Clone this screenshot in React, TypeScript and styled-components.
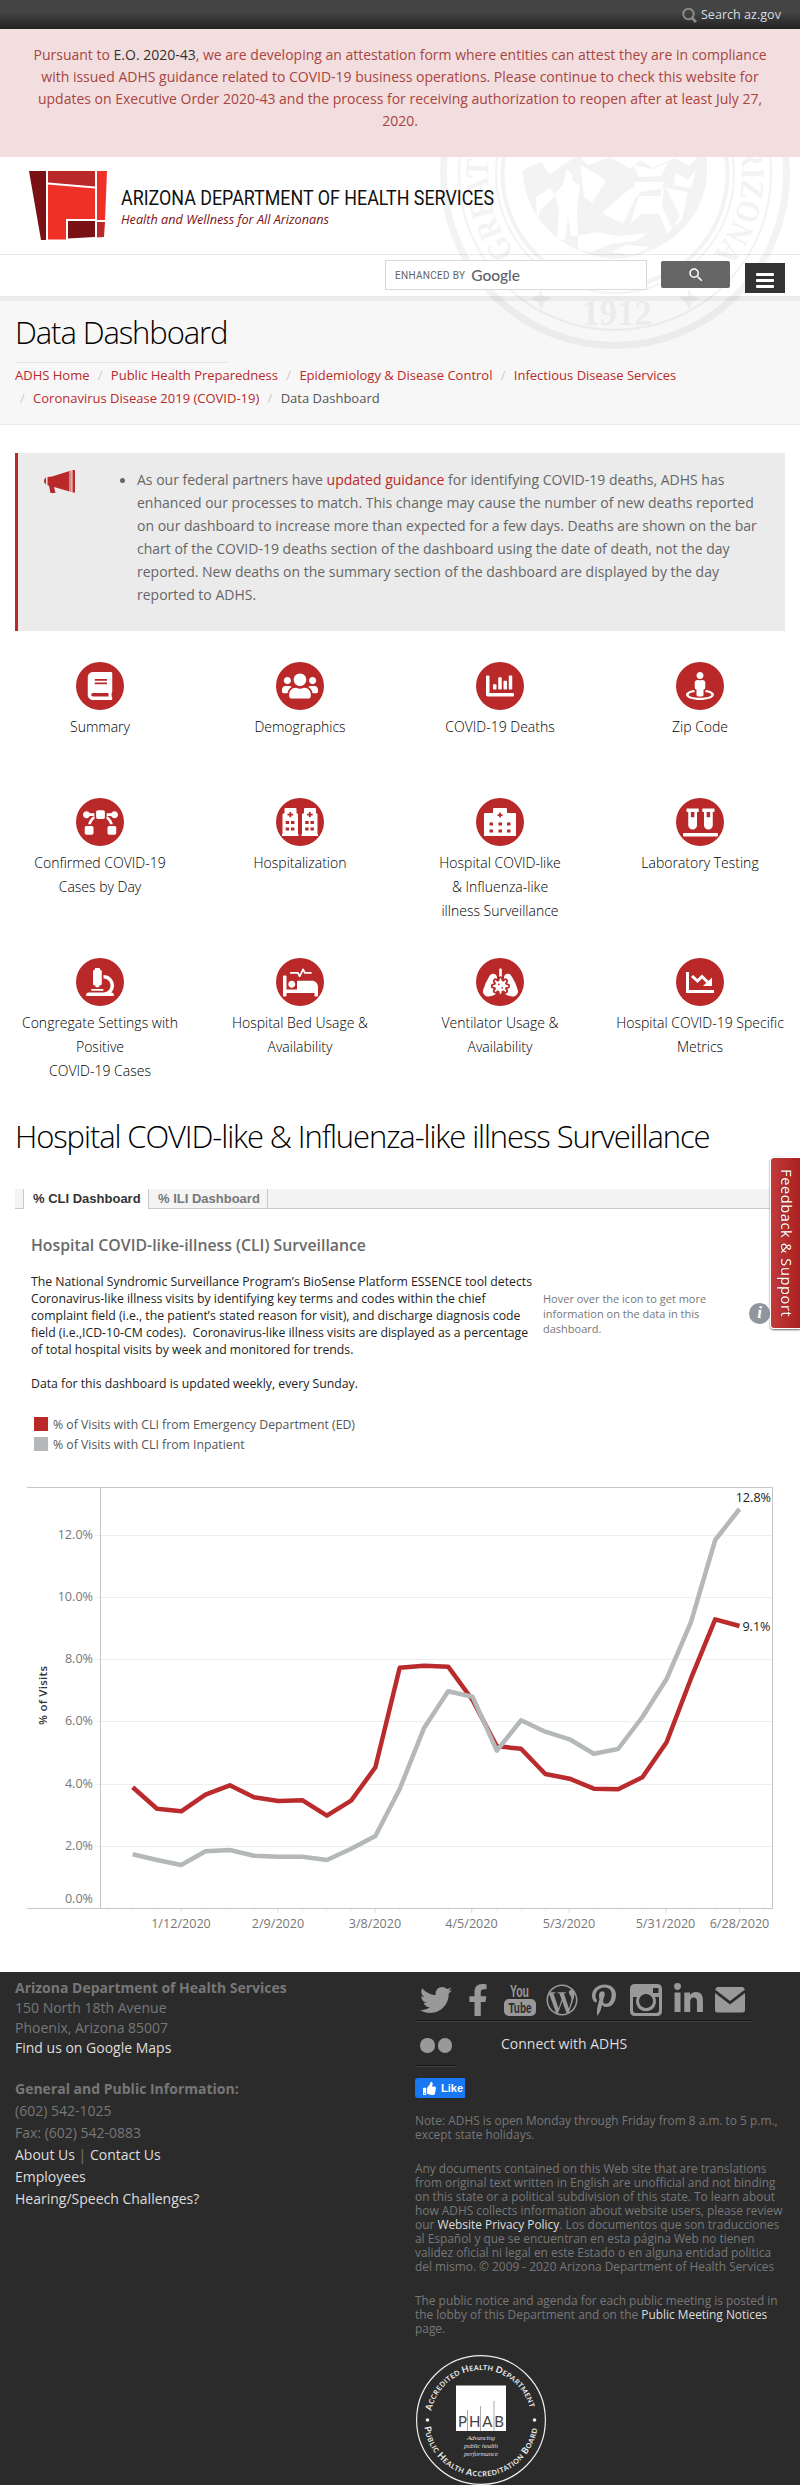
import React from 'react';
import styled, { createGlobalStyle } from 'styled-components';
import {
  FaBook, FaUsers, FaChartBar, FaStreetView, FaBezierCurve, FaVials, FaMicroscope, FaProcedures,
  FaLungsVirus, FaTwitter, FaFacebookF, FaWordpressSimple, FaPinterestP, FaLinkedinIn,
  FaThumbsUp,
} from 'react-icons/fa';
import { MdSearch } from 'react-icons/md';

const RED = '#b92929';
const GREY_SERIES = '#b4b8b8';

const GlobalStyle = createGlobalStyle`
  * { box-sizing: border-box; }
  body { margin: 0; background: #fff; font-family: 'Open Sans', 'Noto Sans', sans-serif; }
  h1, h2, h3, p, ul { margin: 0; padding: 0; font-weight: 400; }
  a { color: ${RED}; text-decoration: none; }
  svg { display: block; }
`;

const Page = styled.div`
  position: relative;
  width: 800px;
  height: 2485px;
  overflow: hidden;
  white-space: nowrap;
`;

const TopBar = styled.div`
  height: 29px;
  background: linear-gradient(#444 40%, #222);
  display: flex;
  align-items: center;
  justify-content: flex-end;
  gap: 4px;
  padding-right: 19px;
  color: #d5dde5;
  font-size: 12.6px;
`;

const Banner = styled.div`
  height: 128px;
  padding-top: 15px;
  background: #f2dede;
  color: #a94442;
  text-align: center;
  font-size: 14px;
  line-height: 22px;
  a { color: #333; }
`;

const Masthead = styled.header`
  position: relative;
  background: #fff;
`;

const Seal = styled.svg`
  position: absolute;
  left: 440px;
  top: 0;
`;

const Brand = styled.div`
  height: 98px;
  padding: 14px 0 0 29px;
  border-bottom: 1px solid #e9e9e9;
`;

const SearchRow = styled.div`
  position: relative;
  z-index: 1;
  height: 41px;
  display: flex;
  justify-content: flex-end;
  padding: 5px 15px 0 0;
`;

const SearchBox = styled.div`
  width: 262px;
  height: 30px;
  background: #fff;
  border: 1px solid #d9d9d9;
  padding-left: 9px;
  display: flex;
  align-items: center;
  gap: 6px;
  font: 10px Roboto, sans-serif;
  letter-spacing: 0.3px;
  color: #5f6368;
  b { font: 500 15.5px Lato, sans-serif; letter-spacing: 0; }
`;

const SearchButton = styled.div`
  width: 69px;
  height: 27px;
  margin: 1px 15px 0 14px;
  border-radius: 2px;
  background: #666;
  color: #fff;
  display: flex;
  align-items: center;
  justify-content: center;
`;

const MenuButton = styled.div`
  width: 40px;
  height: 30px;
  margin-top: 3px;
  padding: 10px 11px 0;
  background: #333;
  display: flex;
  flex-direction: column;
  gap: 3px;
  i { height: 3px; border-radius: 1px; background: #fff; }
`;

const TitleBand = styled.section`
  height: 129px;
  border-top: 5px solid #ebebeb;
  border-bottom: 1px solid #e9e9e9;
  background: #f7f7f7;
  padding-left: 15px;
  display: flex;
  flex-direction: column;
  align-items: flex-start;
`;

const PageTitle = styled.h1`
  height: 62px;
  padding-top: 9px;
  border-bottom: 1px solid #e3e3e3;
  color: #000;
  font-size: 31px;
  font-weight: 300;
  line-height: 44px;
  letter-spacing: -1.1px;
`;

const Crumbs = styled.nav`
  padding-top: 1px;
  font-size: 13px;
  line-height: 23px;
  color: #555;
  i { color: #ccc; font-style: normal; margin: 0 8.3px; }
  i.lead { margin-left: 5px; }
`;

const Notice = styled.aside`
  margin: 28px 15px 0;
  height: 178px;
  border-left: 3px solid ${RED};
  background: #ebebeb;
  padding: 15px 0 0 26px;
  display: flex;
  color: #666;
  font-size: 14px;
  line-height: 23px;
`;

const NoticeIcon = styled.div`
  width: 75px;
  padding-top: 1px;
`;

const Bullet = styled.span`
  width: 5px;
  height: 5px;
  margin: 10px 12px 0 1px;
  border-radius: 50%;
  background: #666;
`;

const TileGrid = styled.div`
  display: grid;
  grid-template-columns: repeat(4, 200px);
  grid-template-rows: 136px 160px 125px;
  margin-top: 31px;
`;

const Tile = styled.div`
  display: flex;
  flex-direction: column;
  align-items: center;
  text-align: center;
  color: #000;
  font-size: 14px;
  font-weight: 300;
  line-height: 24px;
`;

const Disc = styled.div`
  width: 48px;
  height: 48px;
  margin-bottom: 5px;
  border-radius: 50%;
  background: ${RED};
  color: #fff;
  display: flex;
  align-items: center;
  justify-content: center;
`;

const SectionTitle = styled.h2`
  margin-top: 31px;
  padding-left: 15px;
  height: 75px;
  color: #000;
  font-size: 31px;
  font-weight: 300;
  line-height: 44px;
  letter-spacing: -1.1px;
`;

const Tabs = styled.div`
  margin: 0 15px;
  height: 20px;
  background: #f4f4f4;
  display: flex;
  font: bold 13px 'Liberation Sans', Arial, sans-serif;
  line-height: 19px;
  &::before { content: ''; width: 8px; border-bottom: 1px solid #c9c9c9; }
  &::after { content: ''; flex: 1; border-bottom: 1px solid #c9c9c9; }
`;

const Tab = styled.div<{ $active?: boolean }>`
  width: ${p => (p.$active ? 126 : 119)}px;
  padding-left: 9px;
  border: 1px solid #c9c9c9;
  border-width: ${p => (p.$active ? '0 1px' : '0 1px 1px 0')};
  background: ${p => (p.$active ? '#fff' : '#f4f4f4')};
  color: ${p => (p.$active ? '#333' : '#777')};
`;

const DashTitle = styled.h3`
  padding: 24px 0 0 31px;
  height: 64px;
  color: #6a6a6a;
  font-size: 15.8px;
  font-weight: 600;
  line-height: 24px;
`;

const Intro = styled.div`
  height: 137px;
  display: flex;
  padding-left: 31px;
`;

const IntroText = styled.p`
  width: 512px;
  color: #222;
  font-size: 12.25px;
  line-height: 17px;
  white-space: pre;
`;

const Hint = styled.p`
  width: 206px;
  padding-top: 18px;
  color: #777;
  font-size: 11px;
  line-height: 15px;
`;

const InfoBadge = styled.div`
  width: 21px;
  height: 21px;
  margin-top: 30px;
  border-radius: 50%;
  background: #8f969e;
  color: #fff;
  text-align: center;
  font: italic bold 17px/20px 'Liberation Serif', serif;
`;

const Legend = styled.div`
  padding: 4px 0 0 34px;
  height: 60px;
  color: #555;
  font-size: 12.25px;
`;

const LegendRow = styled.div`
  display: flex;
  align-items: center;
  height: 20px;
  gap: 5px;
`;

const Swatch = styled.span<{ $color: string }>`
  width: 14px;
  height: 14px;
  background: ${p => p.$color};
`;

const FeedbackTab = styled.div`
  position: absolute;
  right: 0;
  top: 1157px;
  width: 30px;
  height: 172px;
  border: 1px solid #fff;
  border-right: 0;
  border-radius: 4px 0 0 4px;
  background: linear-gradient(90deg, #c23a3a, #ab2020);
  box-shadow: 0 1px 2px rgba(0, 0, 0, 0.6);
  color: #fff;
  writing-mode: vertical-rl;
  text-align: center;
  font-size: 14.6px;
  line-height: 26px;
  letter-spacing: 0.6px;
  text-shadow: 0 1px 1px rgba(0, 0, 0, 0.4);
`;

const Footer = styled.footer`
  margin-top: 22px;
  height: 513px;
  background: #2b2b2b;
  display: flex;
  padding-left: 15px;
  color: #777;
  font-size: 14px;
  a { color: #ddd; }
`;

const Contact = styled.div`
  width: 400px;
  padding-top: 6px;
`;

const Address = styled.p<{ $lh: number }>`
  line-height: ${p => p.$lh}px;
  margin-bottom: 20px;
  b { font-weight: 700; }
`;

const Social = styled.div`
  width: 336px;
  height: 50px;
  border-bottom: 1px solid #444;
  box-shadow: inset 0 -1px #151515;
  color: #999;
`;

const Flickr = styled.div`
  display: flex;
  height: 45px;
  color: #999;
  span { padding: 12px 0 0 44px; line-height: 20px; color: #ddd; }
`;

const FlickrLink = styled.div`
  width: 42px;
  display: flex;
  gap: 3px;
  padding: 16px 0 0 5px;
  border-bottom: 1px solid #444;
  box-shadow: inset 0 -1px #151515;
  i { width: 14.5px; height: 14.5px; border-radius: 50%; background: #999; }
`;

const Like = styled.div`
  width: 50px;
  height: 20px;
  margin: 11px 0 15px;
  padding-left: 8px;
  border-radius: 3px 0 0 3px;
  background: #1877f2;
  color: #fff;
  display: flex;
  align-items: center;
  gap: 5px;
  font: bold 11px 'Liberation Sans', Arial, sans-serif;
`;

const Fine = styled.p<{ $gap: number }>`
  font-size: 11.9px;
  line-height: 14px;
  margin-bottom: ${p => p.$gap}px;
`;

function StateSeal() {
  return (
    <Seal width="352" height="193" viewBox="440 157 352 193" fill="none" stroke="#000" opacity="0.045">
      <circle cx="615" cy="174" r="171.5" strokeWidth="7" />
      <circle cx="615" cy="174" r="156" strokeWidth="2" />
      <circle cx="615" cy="174" r="119" strokeWidth="2" />
      <circle cx="615" cy="174" r="112.5" strokeWidth="4" />
      <path d="M523 157v12c0 48 38 86 92 90 54-4 92-42 92-90v-12h-9l-9 9-14-8-22 10-13-8-10 9-20-12-22 8-9-10-18 11-11 9-9-13-18 8z" fill="#000" stroke="none" />
      <path d="M566 170q8 2 6 10l8 6-3 22 1 28h-7l-3-20-3 24-8-1 2-30-4-16 8-8zM602 213l30-26 7 3-16 34zM634 182h30l-4 14h-24zM640 192l-10 32 12-10h17l9 20 12-18-14-28zM664 188l24 4-6 28-10 8-10-22zM578 236l18-4 22 4 30-3-12 8-26 3-18 8-14-2zM612 252l14-7 24 2-16 8zM580 165l18 10 8 6-14 22-8-6zM536 197l14-9 5 8-15 14-3 14zM633 165l20 4 16-7-8 14-22 1zM676 173l12 7 8-10-5 18-17-3z" fill="#fff" stroke="none" />
      <path id="sealArc" d="M515 252.100A127 127 0 1 1 715 252.100" stroke="none" />
      <text fill="#000" stroke="none" fontFamily="Liberation Serif" fontWeight="700" fontSize="33">
        <textPath href="#sealArc" textLength="570" lengthAdjust="spacingAndGlyphs">GREAT SEAL OF THE STATE OF ARIZONA</textPath>
      </text>
      <path d="M541 289l2 7 8 1-6 4-4 9-3-8-8-3 7-3zM689 289l-2 7-8 1 6 4 4 9 3-8 8-3-7-3z" fill="#000" stroke="none" />
      <text x="617" y="325" textAnchor="middle" fill="#000" stroke="none" fontFamily="Liberation Serif" fontWeight="700" fontSize="35">1912</text>
    </Seal>
  );
}

function BrandLogo() {
  return (
    <svg width="480" height="72" viewBox="29 171 480 72">
      <path d="M29 171h17v69h-5z" fill="#7a1115" />
      <path d="M48 171h47v15.500l-47-4z" fill={RED} />
      <path d="M97 171h10l-2 49h-8z" fill="#ef3026" />
      <path d="M48 184.500l47 4V219H66v20.500H48z" fill="#ef3026" />
      <path d="M68 221h27v16l-27 1.500z" fill="#7a1115" />
      <path d="M97 222h8l-1 15-7 .5z" fill={RED} />
      <text x="121" y="205" fontFamily="Roboto" fontSize="21" fill="#111" textLength="373" lengthAdjust="spacingAndGlyphs">ARIZONA DEPARTMENT OF HEALTH SERVICES</text>
      <text x="121" y="224" fontFamily="Open Sans" fontStyle="italic" fontWeight="500" fontSize="12" fill="#7a1115" textLength="208" lengthAdjust="spacingAndGlyphs">Health and Wellness for All Arizonans</text>
    </svg>
  );
}

const MegaphoneIcon = () => (
  <svg width="32" height="25" viewBox="0 0 32 25" fill={RED}>
    <path d="M2 8.500v7q-2-.8-2-3.500t2-3.500zM3.500 8L8 7.500 25.500 2v20.500L10 18l1.500 6H6.500L5 16.800l-1.500-.5zM28.500 1H31v22.500h-2.500zM26.500 1.500h.8v21.500h-.8z" />
  </svg>
);

const HospitalIcon = () => (
  <svg width="32" height="28" viewBox="0 0 32 28">
    <path d="M1 5h8V1q0-1 1-1h12q1 0 1 1v4h8q1 0 1 1v20h.5v2H0v-2V6q0-1 1-1z" fill="#fff" />
    <path d="M13.500 6.200h1.700V4.500h1.700v1.700h1.700v1.700h-1.700v1.700h-1.700V7.900h-1.700zM5.500 14.500h3.500v3h-3.500zm9 0H18v3h-3.500zm8.500 0h3.500v3H23zM5.500 21.500h3.500v3h-3.500zm9 0H18v3h-3.500zm8.500 0h3.500v3H23z" fill={RED} />
  </svg>
);

const TwinHospitalIcon = () => (
  <svg width="36" height="28" viewBox="0 0 36 28">
    {[0, 19.5].map(x => (
      <g key={x} transform={`translate(${x} 0)`}>
        <path d="M2.500 5V1q0-1 1-1h10q1 0 1 1v4l1.500 1v20h.5v2H0v-2h.500V6z" fill="#fff" />
        <path d="M5.500 5.700h2V4h1.700v1.700h2v1.700h-2V9.200H7.500V7.400h-2zM3.700 13h3.400v3H3.700zm5.300 0h3.400v3H9zM3.700 19.500h3.400v3H3.700zm5.300 0h3.400v3H9z" fill={RED} />
      </g>
    ))}
  </svg>
);

const DecliningChartIcon = () => (
  <svg width="28" height="21" viewBox="0 0 28 21" fill="none" stroke="#fff">
    <path d="M1.500 0v19.500H28" strokeWidth="3" />
    <path d="M6 4l5.500 5L16 4.500l7 7" strokeWidth="3" />
    <path d="M26 5.500V14h-9z" fill="#fff" stroke="none" />
  </svg>
);

const tiles: [React.ReactNode, string[]][] = [
  [<FaBook size={28} />, ['Summary']],
  [<FaUsers size={36} />, ['Demographics']],
  [<FaChartBar size={28} />, ['COVID-19 Deaths']],
  [<FaStreetView size={28} />, ['Zip Code']],
  [<FaBezierCurve size={35} />, ['Confirmed COVID-19', 'Cases by Day']],
  [<TwinHospitalIcon />, ['Hospitalization']],
  [<HospitalIcon />, ['Hospital COVID-like', '& Influenza-like', 'illness Surveillance']],
  [<FaVials size={35} />, ['Laboratory Testing']],
  [<FaMicroscope size={28} />, ['Congregate Settings with', 'Positive', 'COVID-19 Cases']],
  [<FaProcedures size={35} />, ['Hospital Bed Usage &', 'Availability']],
  [<FaLungsVirus size={35} />, ['Ventilator Usage &', 'Availability']],
  [<DecliningChartIcon />, ['Hospital COVID-19 Specific', 'Metrics']],
];

const emergency = [317.3, 338.7, 341.3, 324.7, 315.3, 327.3, 331, 330.3, 345.7, 330.7, 297.3, 197.7, 195.7, 196.7, 230, 276.3, 278.7, 304, 308.7, 318.7, 319.3, 307.3, 272.3, 208.7, 149.3, 156];
const inpatient = [384.3, 390, 395, 381.3, 380, 385.7, 386.7, 386.7, 390, 378.7, 366, 319, 258.3, 221.3, 226.7, 280.7, 250.3, 261.7, 269.3, 283.7, 279, 247, 209, 152.3, 70, 39];
const toPoints = (ys: number[]) => ys.map((y, i) => `${(132.7 + i * 24.27).toFixed(1)},${y}`).join(' ');
const yTicks: [number, string, number][] = [
  [65.5, '12.0%', 65], [127.5, '10.0%', 127], [189.5, '8.0%', 189], [251.5, '6.0%', 251],
  [314.5, '4.0%', 314], [376.5, '2.0%', 376], [438.5, '0.0%', 429],
];
const xTicks: [number, string][] = [
  [181, '1/12/2020'], [278, '2/9/2020'], [375, '3/8/2020'], [471.5, '4/5/2020'],
  [569, '5/3/2020'], [665.5, '5/31/2020'], [739.5, '6/28/2020'],
];

function VisitsChart() {
  return (
    <svg width="800" height="480" viewBox="0 0 800 480" fontFamily="Open Sans" fontSize="12.6" fill="#777">
      {yTicks.map(([y, label, ly], i) => (
        <g key={label}>
          {i < 6 && <path d={`M95 ${y}H772`} stroke="#efefef" />}
          <text x="93" y={ly + 4} textAnchor="end">{label}</text>
        </g>
      ))}
      {Array.from({ length: 28 }, (_, i) => (
        <path key={i} d={`M${108.5 + i * 24.27} 439v2`} stroke="#eee" />
      ))}
      {xTicks.map(([x, label]) => (
        <g key={label}>
          <path d={`M${x} 439v4`} stroke="#e4e4e4" />
          <text x={x} y="458" textAnchor="middle">{label}</text>
        </g>
      ))}
      <path d="M27 17.500H772.500V438.500M27 438.500H773M100.500 17V438" fill="none" stroke="#c6c6c6" />
      <polyline points={toPoints(emergency)} fill="none" stroke="#b92b2d" strokeWidth="4.500" strokeLinejoin="round" />
      <polyline points={toPoints(inpatient)} fill="none" stroke={GREY_SERIES} strokeWidth="4.500" strokeLinejoin="round" />
      <text x="771" y="32" textAnchor="end" fill="#222">12.8%</text>
      <text x="770.500" y="161" textAnchor="end" fill="#222">9.1%</text>
      <text transform="translate(47 225.500) rotate(-90)" textAnchor="middle" fill="#333" fontWeight="600" fontSize="11.500" textLength="59">% of Visits</text>
    </svg>
  );
}

const SocialIcons = () => (
  <svg width="336" height="48" viewBox="415 1972 336 48" fill="#999">
    <FaTwitter x={420} y={1984} size={32} />
    <FaFacebookF x={462} y={1984} size={32} />
    <g fontFamily="Liberation Sans Narrow, Liberation Sans" fontWeight="700" fontSize="16">
      <text x="510" y="1997" textLength="19" lengthAdjust="spacingAndGlyphs">You</text>
      <rect x="504" y="1999" width="32" height="17" rx="5" />
      <text x="508.500" y="2013" fill="#2b2b2b" textLength="23" lengthAdjust="spacingAndGlyphs" fontSize="15">Tube</text>
    </g>
    <FaWordpressSimple x={546} y={1984} size={32} />
    <FaPinterestP x={588} y={1984} size={32} />
    <path fillRule="evenodd" d="M635 1984h22q5 0 5 5v22q0 5-5 5h-22q-5 0-5-5v-22q0-5 5-5zM653 1988v5h5.500v-5zM633 1997v13q0 3 3 3h20q3 0 3-3v-13h-4a10 10 0 1 1-18 0zM646 1994a7 7 0 1 0 .01 0z" />
    <FaLinkedinIn x={672} y={1983} size={33} />
    <path d="M717 1987h26l2 2.500-15 11.500-15-11.500zM715 1993l15 11.500 15-11.500v17q0 2.500-2.500 2.500h-25q-2.500 0-2.500-2.500z" />
  </svg>
);

function PhabSeal() {
  return (
    <svg width="132" height="131" viewBox="414 2354 132 131">
      <circle cx="480" cy="2420" r="64.400" fill="none" stroke="#eee" strokeWidth="1.200" />
      <path id="phabTop" d="M430.400 2411A50.500 50.500 0 0 1 529.600 2411" fill="none" />
      <path id="phabBottom" d="M423.500 2427A57 57 0 0 0 536.500 2427" fill="none" />
      <g fill="#eee" fontFamily="Lato" fontWeight="700" fontSize="7">
        <text><textPath href="#phabTop" textLength="136">
          <tspan fontSize="9">A</tspan>CCREDITED <tspan fontSize="9">H</tspan>EALTH <tspan fontSize="9">D</tspan>EPARTMENT
        </textPath></text>
        <text><textPath href="#phabBottom" textLength="162">
          <tspan fontSize="9">P</tspan>UBLIC <tspan fontSize="9">H</tspan>EALTH <tspan fontSize="9">A</tspan>CCREDITATION <tspan fontSize="9">B</tspan>OARD
        </textPath></text>
        <circle cx="426.500" cy="2420" r="1.800" />
        <circle cx="533.500" cy="2420" r="1.800" />
      </g>
      <rect x="455" y="2385.500" width="50" height="45.500" fill="#fff" />
      <path d="M466.500 2410v21M479.500 2406v25M493 2401v30" stroke="#aaa" />
      <text x="457" y="2427" fontFamily="Lato" fontSize="15" fill="#444" textLength="46">PHAB</text>
      <g fill="#ddd" fontFamily="Liberation Serif" fontStyle="italic" fontSize="7" textAnchor="middle">
        <text x="480" y="2440" textLength="28">Advancing</text>
        <text x="480" y="2448" textLength="34">public health</text>
        <text x="480" y="2455.500" textLength="34">performance</text>
      </g>
    </svg>
  );
}

export default function App() {
  return (
    <Page>
      <GlobalStyle />
      <TopBar>
        <svg width="15" height="16" viewBox="0 0 15 16" fill="none" stroke="#8a8a8a">
          <circle cx="6.500" cy="7" r="5.200" strokeWidth="2" />
          <path d="M10 11l4 4" strokeWidth="2.800" />
        </svg>
        Search az.gov
      </TopBar>
      <Banner>
        Pursuant to <a href="#eo">E.O. 2020-43</a>, we are developing an attestation form where entities can attest they are in compliance<br />
        with issued ADHS guidance related to COVID-19 business operations. Please continue to check this website for<br />
        updates on Executive Order 2020-43 and the process for receiving authorization to reopen after at least July 27,<br />
        2020.
      </Banner>

      <Masthead>
        <Brand><BrandLogo /></Brand>
        <SearchRow>
          <SearchBox>ENHANCED BY <b>Google</b></SearchBox>
          <SearchButton><MdSearch size={18} /></SearchButton>
          <MenuButton><i /><i /><i /></MenuButton>
        </SearchRow>
        <TitleBand>
          <PageTitle>Data Dashboard</PageTitle>
          <Crumbs>
            <a href="#home">ADHS Home</a><i>/</i><a href="#php">Public Health Preparedness</a><i>/</i>
            <a href="#edc">Epidemiology &amp; Disease Control</a><i>/</i><a href="#ids">Infectious Disease Services</a><br />
            <i className="lead">/</i><a href="#covid">Coronavirus Disease 2019 (COVID-19)</a><i>/</i>Data Dashboard
          </Crumbs>
        </TitleBand>
        <StateSeal />
      </Masthead>

      <Notice>
        <NoticeIcon><MegaphoneIcon /></NoticeIcon>
        <Bullet />
        <p>
          As our federal partners have <a href="#guidance">updated guidance</a> for identifying COVID-19 deaths, ADHS has<br />
          enhanced our processes to match. This change may cause the number of new deaths reported<br />
          on our dashboard to increase more than expected for a few days. Deaths are shown on the bar<br />
          chart of the COVID-19 deaths section of the dashboard using the date of death, not the day<br />
          reported. New deaths on the summary section of the dashboard are displayed by the day<br />
          reported to ADHS.
        </p>
      </Notice>

      <TileGrid>
        {tiles.map(([icon, lines]) => (
          <Tile key={lines.join(' ')}>
            <Disc>{icon}</Disc>
            {lines.map(line => <span key={line}>{line}</span>)}
          </Tile>
        ))}
      </TileGrid>

      <SectionTitle>Hospital COVID-like &amp; Influenza-like illness Surveillance</SectionTitle>

      <Tabs>
        <Tab $active>% CLI Dashboard</Tab>
        <Tab>% ILI Dashboard</Tab>
      </Tabs>
      <DashTitle>Hospital COVID-like-illness (CLI) Surveillance</DashTitle>
      <Intro>
        <IntroText>
          The National Syndromic Surveillance Program’s BioSense Platform ESSENCE tool detects<br />
          Coronavirus-like illness visits by identifying key terms and codes within the chief<br />
          complaint field (i.e., the patient’s stated reason for visit), and discharge diagnosis code<br />
          field (i.e.,ICD-10-CM codes).{'  '}Coronavirus-like illness visits are displayed as a percentage<br />
          of total hospital visits by week and monitored for trends.<br />
          <br />
          Data for this dashboard is updated weekly, every Sunday.
        </IntroText>
        <Hint>
          Hover over the icon to get more<br />
          information on the data in this<br />
          dashboard.
        </Hint>
        <InfoBadge>i</InfoBadge>
      </Intro>
      <Legend>
        <LegendRow><Swatch $color={RED} />% of Visits with CLI from Emergency Department (ED)</LegendRow>
        <LegendRow><Swatch $color={GREY_SERIES} />% of Visits with CLI from Inpatient</LegendRow>
      </Legend>
      <VisitsChart />

      <Footer>
        <Contact>
          <Address $lh={20}>
            <b>Arizona Department of Health Services</b><br />
            150 North 18th Avenue<br />
            Phoenix, Arizona 85007<br />
            <a href="#maps">Find us on Google Maps</a>
          </Address>
          <Address $lh={22}>
            <b>General and Public Information:</b><br />
            (602) 542-1025<br />
            Fax: (602) 542-0883<br />
            <a href="#about">About Us</a> | <a href="#contact">Contact Us</a><br />
            <a href="#employees">Employees</a><br />
            <a href="#hearing">Hearing/Speech Challenges?</a>
          </Address>
        </Contact>
        <div>
          <Social><SocialIcons /></Social>
          <Flickr>
            <FlickrLink><i /><i /></FlickrLink>
            <span>Connect with ADHS</span>
          </Flickr>
          <Like><FaThumbsUp size={13} />Like</Like>
          <Fine $gap={20}>
            Note: ADHS is open Monday through Friday from 8 a.m. to 5 p.m.,<br />
            except state holidays.
          </Fine>
          <Fine $gap={20}>
            Any documents contained on this Web site that are translations<br />
            from original text written in English are unofficial and not binding<br />
            on this state or a political subdivision of this state. To learn about<br />
            how ADHS collects information about website users, please review<br />
            our <a href="#privacy">Website Privacy Policy</a>. Los documentos que son traducciones<br />
            al Español y que se encuentran en esta página Web no tienen<br />
            validez oficial ni legal en este Estado o en alguna entidad politica<br />
            del mismo. © 2009 - 2020 Arizona Department of Health Services
          </Fine>
          <Fine $gap={19}>
            The public notice and agenda for each public meeting is posted in<br />
            the lobby of this Department and on the <a href="#notices">Public Meeting Notices</a><br />
            page.
          </Fine>
          <PhabSeal />
        </div>
      </Footer>

      <FeedbackTab>Feedback &amp; Support</FeedbackTab>
    </Page>
  );
}
